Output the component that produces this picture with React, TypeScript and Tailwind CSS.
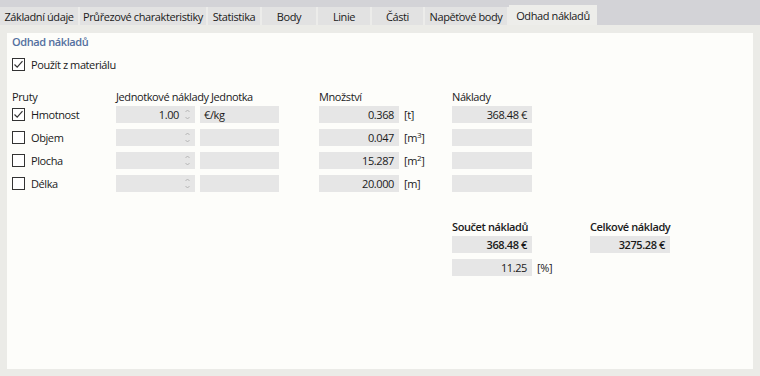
import React from "react";

const font = { fontFamily: '"Open Sans", "Noto Sans", sans-serif', letterSpacing: "-0.4px" };

function CheckBox({ checked }: { checked?: boolean }) {
  return (
    <div className="w-[13px] h-[13px] border border-[#333333] bg-white flex items-center justify-center shrink-0">
      {checked && (
        <svg width="11" height="11" viewBox="0 0 11 11">
          <path d="M1.5 5.5 L4.2 8.2 L9.5 2.2" fill="none" stroke="#333333" strokeWidth="1.2" />
        </svg>
      )}
    </div>
  );
}

function Field({ w = 80, value, bold }: { w?: number; value?: string; bold?: boolean }) {
  return (
    <div className="h-[17px] bg-[#e6e6e6] flex items-center justify-end shrink-0" style={{ width: w }}>
      {value && (
        <span className={`text-[11px] leading-none whitespace-nowrap text-[#1a1a1a] pr-[5px] ${bold ? "font-semibold" : ""}`}>
          {value}
        </span>
      )}
    </div>
  );
}

function SpinField({ value }: { value?: string }) {
  return (
    <div className="relative h-[17px] w-[79px] bg-[#e6e6e6] flex items-center justify-end shrink-0">
      {value && <span className="text-[11px] leading-none text-[#1a1a1a] pr-[16px]">{value}</span>}
      <svg className="absolute right-[5px] top-[3px]" width="5" height="11" viewBox="0 0 5 11">
        <path d="M0.5 3 L2.5 1 L4.5 3" fill="none" stroke="#a8a8a8" strokeWidth="0.8" />
        <path d="M0.5 8 L2.5 10 L4.5 8" fill="none" stroke="#a8a8a8" strokeWidth="0.8" />
      </svg>
    </div>
  );
}

function TextField({ value }: { value?: string }) {
  return (
    <div className="h-[17px] w-[79px] bg-[#e6e6e6] flex items-center shrink-0">
      {value && <span className="text-[11px] leading-none text-[#1a1a1a] pl-[4px]">{value}</span>}
    </div>
  );
}

const tabs: { label: string; w: number }[] = [
  { label: "Základní údaje", w: 80 },
  { label: "Průřezové charakteristiky", w: 128 },
  { label: "Statistika", w: 54 },
  { label: "Body", w: 56 },
  { label: "Linie", w: 54 },
  { label: "Části", w: 53 },
  { label: "Napěťové body", w: 84 },
];

function Unit({ children }: { children: React.ReactNode }) {
  return <div className="w-[53px] pl-[5px] text-[11px] leading-none text-[#1a1a1a] shrink-0 whitespace-nowrap">{children}</div>;
}

export default function App() {
  const rows = [
    { label: "Hmotnost", checked: true, unitCost: "1.00", unit: "€/kg", qty: "0.368", qu: <>[t]</>, cost: "368.48 €" },
    { label: "Objem", checked: false, unitCost: "", unit: "", qty: "0.047", qu: <>[m<sup className="text-[8px]">3</sup>]</>, cost: "" },
    { label: "Plocha", checked: false, unitCost: "", unit: "", qty: "15.287", qu: <>[m<sup className="text-[8px]">2</sup>]</>, cost: "" },
    { label: "Délka", checked: false, unitCost: "", unit: "", qty: "20.000", qu: <>[m]</>, cost: "" },
  ];
  return (
    <div className="w-[760px] h-[376px] bg-[#ebebe7] flex flex-col text-[#1a1a1a]" style={font}>
      <div className="h-[25px] bg-[#d3d3d7] flex items-end shrink-0">
        {tabs.map((t) => (
          <div
            key={t.label}
            className="h-[18px] bg-[#e2e2e2] border-r-2 border-[#ececea] flex items-center justify-center text-[11px] leading-none shrink-0 whitespace-nowrap"
            style={{ width: t.w }}
          >
            {t.label}
          </div>
        ))}
        <div className="h-[20px] w-[88px] bg-[#ededea] flex items-center justify-center text-[11px] leading-none whitespace-nowrap">
          Odhad nákladů
        </div>
      </div>
      <div className="flex-1 px-[7px] pt-[8px] pb-[7px] flex">
        <div className="flex-1 bg-[#fdfdfa] pl-[5px] flex flex-col">
          <div className="text-[11px] font-semibold text-[#5470a0] h-[18px] flex items-center whitespace-nowrap">Odhad nákladů</div>
          <div className="mt-[7px] flex items-center gap-[6px] h-[13px]">
            <CheckBox checked />
            <span className="text-[11px] leading-none whitespace-nowrap">Použít z materiálu</span>
          </div>
          <div className="mt-[18px] flex items-center h-[14px] text-[11px] leading-none whitespace-nowrap">
            <div className="w-[104px] shrink-0">Pruty</div>
            <div className="w-[95px] shrink-0">Jednotkové náklady</div>
            <div className="w-[108px] shrink-0">Jednotka</div>
            <div className="w-[133px] shrink-0">Množství</div>
            <div>Náklady</div>
          </div>
          <div className="mt-[3px] flex flex-col gap-[6px]">
            {rows.map((r) => (
              <div key={r.label} className="flex items-center h-[17px]">
                <div className="w-[104px] flex items-center gap-[6px] shrink-0">
                  <CheckBox checked={r.checked} />
                  <span className="text-[11px] leading-none font-medium">{r.label}</span>
                </div>
                <SpinField value={r.unitCost} />
                <div className="w-[5px] shrink-0" />
                <TextField value={r.unit} />
                <div className="w-[40px] shrink-0" />
                <Field w={80} value={r.qty} />
                <Unit>{r.qu}</Unit>
                <Field w={80} value={r.cost} />
              </div>
            ))}
          </div>
          <div className="mt-[26px] flex pl-[440px]">
            <div className="flex flex-col w-[138px] shrink-0">
              <div className="h-[17px] flex items-center text-[11px] font-semibold leading-none whitespace-nowrap">Součet nákladů</div>
              <div className="mt-[1px]"><Field w={80} value="368.48 €" bold /></div>
              <div className="mt-[6px] flex items-center">
                <Field w={80} value="11.25" />
                <span className="pl-[5px] text-[11px] leading-none">[%]</span>
              </div>
            </div>
            <div className="flex flex-col">
              <div className="h-[17px] flex items-center text-[11px] font-semibold leading-none whitespace-nowrap">Celkové náklady</div>
              <div className="mt-[1px]"><Field w={80} value="3275.28 €" bold /></div>
            </div>
          </div>
        </div>
      </div>
    </div>
  );
}
